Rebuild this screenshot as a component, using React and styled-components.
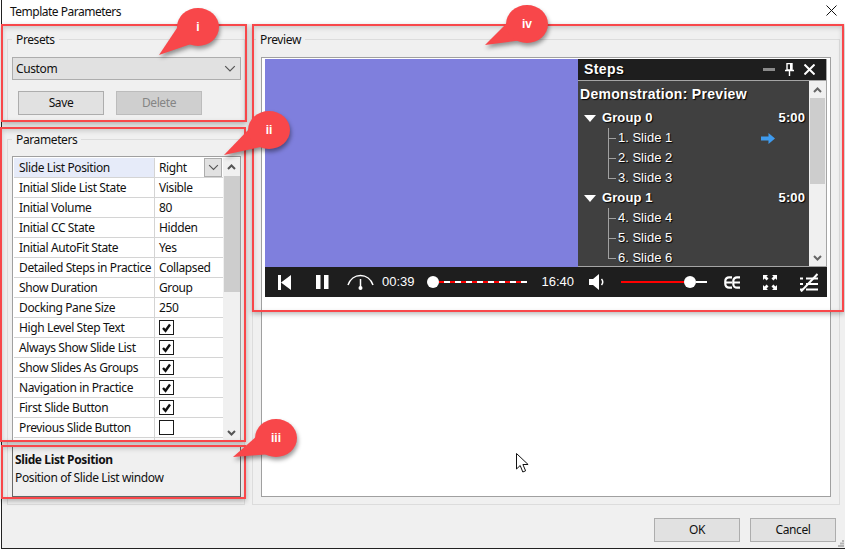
import React from 'react';
import styled, {createGlobalStyle} from 'styled-components';

const GlobalStyle = createGlobalStyle`
  html, body {
    margin: 0;
    background: #fff;
  }
  * {
    box-sizing: border-box;
  }
`

const uiFont = `"Noto Sans", "Open Sans", sans-serif`
const playerFont = `"Liberation Sans", Arial, sans-serif`

// top level
const Page = styled.div`
  position: relative;
  width: 845px;
  height: 549px;
  overflow: hidden;
  background: #fff;
  font: 12px/16px ${uiFont};
  letter-spacing: -0.38px;
  color: #111;
`

const Dialog = styled.div`
  display: flex;
  flex-direction: column;
  height: 549px;
  margin-left: 1px;
  border-left: 1px solid #222;
  border-bottom: 1px solid #222;
  background: #f0f0f0;
`

const TitleBar = styled.div`
  display: flex;
  align-items: center;
  justify-content: space-between;
  height: 24px;
  padding: 0 8px 0 8px;
  background: #fff;
  letter-spacing: -0.5px;
`

const Content = styled.div`
  display: flex;
  gap: 7px;
  padding: 7px 0 0 5px;
`

const LeftColumn = styled.div`
  display: flex;
  flex-direction: column;
  gap: 9px;
  width: 238px;
`

const GroupBox = styled.fieldset`
  display: flex;
  flex-direction: column;
  min-width: 0;
  margin: 0;
  padding: 0 3px ${p => p.$bottom || 7}px 4px;
  border: 1px solid #dcdcdc;
`

const GroupLegend = styled.legend`
  height: 16px;
  padding: 0 4px;
  margin-left: ${p => p.$offset || 0}px;
  line-height: 18px;
`

const PreviewBox = styled(GroupBox)`
  width: 588px;
  height: 474px;
  padding: 0 8px 7px 8px;
`

// presets
const Combo = styled.div`
  display: flex;
  align-items: center;
  justify-content: space-between;
  height: 23px;
  margin-top: 10px;
  padding: 0 4px 0 3px;
  border: 1px solid #adadad;
  background: #e1e1e1;
`

const PresetButtons = styled.div`
  display: flex;
  gap: 12px;
  margin: 11px 0 0 6px;
`

const Button = styled.div`
  display: flex;
  align-items: center;
  justify-content: center;
  width: 86px;
  height: 24px;
  border: 1px solid ${p => p.disabled ? '#bcbcbc' : '#adadad'};
  background: ${p => p.disabled ? '#cfcfcf' : '#e1e1e1'};
  color: ${p => p.disabled ? '#858585' : '#111'};
`

// parameter table
const ParamTable = styled.div`
  display: flex;
  height: 286px;
  margin-top: 9px;
  padding: 1px 1px 0 1px;
  border: 1px solid #a0a0a0;
  border-bottom: 0;
  background: #fff;
  overflow: hidden;
`

const ParamRows = styled.div`
  width: 209px;
  flex: none;
`

const ParamRow = styled.div`
  display: grid;
  grid-template-columns: 141px 1fr;
  height: 20px;
  border-bottom: 1px solid #d4d4d4;
`

const ParamName = styled.div`
  padding: 2px 0 0 5px;
  white-space: nowrap;
  border-right: 1px solid #d4d4d4;
  background: ${p => p.$selected ? '#e6ebf9' : '#fff'};
`

const ParamValue = styled.div`
  display: flex;
  align-items: center;
  justify-content: space-between;
  padding-left: 4px;
  padding-right: 1px;
`

const RowDrop = styled.div`
  display: flex;
  align-items: center;
  justify-content: center;
  width: 18px;
  height: 19px;
  border: 1px solid #adadad;
  background: #e1e1e1;
`

const Check = styled.div`
  display: flex;
  align-items: center;
  justify-content: center;
  width: 15px;
  height: 15px;
  border: 1px solid #1a1a1a;
  background: #fff;
`

const ScrollBar = styled.div`
  display: flex;
  flex-direction: column;
  align-items: center;
  width: ${p => p.$width}px;
  flex: none;
  height: ${p => p.$height};
  background: #f0f0f0;
`

const ScrollArrow = styled.div`
  display: flex;
  align-items: center;
  justify-content: center;
  width: 100%;
  height: ${p => p.$height}px;
  flex: none;
`

const ScrollThumb = styled.div`
  width: ${p => p.$width}px;
  height: ${p => p.$height}px;
  flex: none;
  background: #cdcdcd;
`

const ScrollSpacer = styled.div`
  flex: 1;
`

const Description = styled.div`
  height: 51px;
  margin-top: 4px;
  padding: 4px 2px;
  border: 1px solid #696969;
  line-height: 18px;
`

const DescriptionTitle = styled.div`
  font-weight: 700;
`

// preview
const PreviewFrame = styled.div`
  height: 440px;
  margin-top: 10px;
  padding: 1px 3px;
  border: 1px solid #a0a0a0;
  background: #fff;
`

const Player = styled.div`
  display: flex;
  flex-direction: column;
  height: 238px;
  font-family: ${playerFont};
  letter-spacing: 0;
`

const Stage = styled.div`
  display: flex;
  height: 208px;
`

const Slide = styled.div`
  flex: 1;
  background: #7f7fdd;
`

const StepsPanel = styled.div`
  display: flex;
  flex-direction: column;
  width: 249px;
  border-right: 1px solid #a5a5a5;
  border-bottom: 1px solid #a5a5a5;
  background: #404040;
  color: #fff;
  text-shadow: 1px 1px 1px #000;
`

const StepsHeader = styled.div`
  display: flex;
  align-items: center;
  height: 22px;
  padding: 0 11px 1px 6px;
  border-bottom: 1px solid #a5a5a5;
  background: #1e1e1e;
  font-size: 14px;
  font-weight: 700;
  letter-spacing: 0.4px;
`

const StepsTitle = styled.div`
  flex: 1;
`

const HeaderIcons = styled.div`
  display: flex;
  align-items: center;
  gap: 10px;
`

const StepsBody = styled.div`
  display: flex;
  flex: 1;
  min-height: 0;
`

const StepsList = styled.div`
  flex: 1;
  min-width: 0;
  padding: 3px 4px 0 2px;
  overflow: hidden;
`

const Demonstration = styled.div`
  height: 24px;
  font-size: 14px;
  line-height: 20px;
  font-weight: 700;
  letter-spacing: 0.3px;
`

const GroupRow = styled.div`
  display: flex;
  align-items: center;
  gap: 6px;
  height: 20px;
  padding-left: 4px;
  font-size: 13px;
  font-weight: 700;
  letter-spacing: 0.1px;
`

const GroupName = styled.div`
  flex: 1;
`

const SlideRow = styled.div`
  display: flex;
  align-items: center;
  height: 20px;
  padding-left: 28px;
  font-size: 13px;
`

const Branch = styled.div`
  width: 10px;
  height: 20px;
  flex: none;
  background:
    linear-gradient(#a0a0a0, #a0a0a0) 0 0 / 1px ${p => p.$last ? '10px' : '20px'} no-repeat,
    linear-gradient(#a0a0a0, #a0a0a0) 0 10px / 8px 1px no-repeat;
`

const SlideName = styled.div`
  width: 143px;
`

const Controls = styled.div`
  display: flex;
  align-items: center;
  height: 30px;
  background: #1e1e1e;
  color: #fff;
  font-size: 13px;
`

const Item = styled.div`
  display: flex;
  flex: none;
  margin-left: ${p => p.$left}px;
`

const TrackWrap = styled.div`
  display: flex;
  align-items: center;
  flex: none;
  width: ${p => p.$width}px;
  margin-left: ${p => p.$left}px;
`

const Knob = styled.div`
  width: 12px;
  height: 12px;
  flex: none;
  border-radius: 50%;
  background: #fff;
`

const Line = styled.div`
  height: 2px;
  flex: ${p => p.$grow ? 1 : 'none'};
  width: ${p => p.$width ? p.$width + 'px' : 'auto'};
  background: ${p => p.$dashed
    ? 'repeating-linear-gradient(90deg, #f00 0 5px, #fff 5px 11px)'
    : p.$color};
`

// footer
const Footer = styled.div`
  display: flex;
  justify-content: flex-end;
  gap: 10px;
  padding: 13px 9px 0 0;
`

// these lie over the dialog, the annotations of the screenshot
const Marker = styled.div`
  position: absolute;
  left: ${p => p.$x}px;
  top: ${p => p.$y}px;
  width: ${p => p.$w}px;
  height: ${p => p.$h}px;
  border: 2px solid #f8474a;
  box-shadow: 0 2px 5px rgba(0, 0, 0, .28), inset 0 2px 5px rgba(0, 0, 0, .16);
`

const CalloutWrap = styled.div`
  position: absolute;
  left: ${p => p.$x}px;
  top: ${p => p.$y}px;
  width: 80px;
  height: 60px;
`

const CalloutText = styled.div`
  position: absolute;
  left: ${p => p.$cx - 20}px;
  top: ${p => p.$cy - 10}px;
  width: 40px;
  height: 20px;
  font: 700 12px/20px ${playerFont};
  letter-spacing: 0;
  color: #fff;
  text-align: center;
`

const CursorWrap = styled.div`
  position: absolute;
  left: 516px;
  top: 453px;
  display: flex;
`

const GripWrap = styled.div`
  position: absolute;
  left: 838px;
  top: 540px;
  display: flex;
`

const CloseWrap = styled.div`
  display: flex;
  margin: 0 0 3px 0;
`

const Chevron = ({size = 12, color = '#555'}) => (
  <svg width={size} height={size * 0.6} viewBox="0 0 10 6">
    <path d="M1 1l4 4 4-4" fill="none" stroke={color} strokeWidth="1"/>
  </svg>
)

const ScrollChevron = ({down, color = '#555'}) => (
  <svg width="9" height="6" viewBox="0 0 9 6">
    <path d={down ? 'M1 1l3.5 3.5L8 1' : 'M1 5l3.5-3.5L8 5'} fill="none" stroke={color} strokeWidth="2"/>
  </svg>
)

const CheckMark = () => (
  <svg width="11" height="10" viewBox="0 0 11 10">
    <path d="M2 5l2.5 2.8L9 1.500" fill="none" stroke="#111" strokeWidth="2.400"/>
  </svg>
)

const Callout = ({x, y, label, blob, tail}) => {
  // blob: [cx, cy, rx, ry] and tail tip, local to the wrapper
  const [cx, cy, rx, ry] = blob
  return <CalloutWrap $x={x} $y={y}>
    <svg width="80" height="60" style={{overflow: 'visible', filter: 'drop-shadow(1px 3px 2px rgba(0,0,0,.4))'}}>
      <path d={`M${tail[0]} ${tail[1]} L${cx - rx + 2} ${cy - 2} L${cx - 4} ${cy + ry - 3} Z`} fill="#f8474a"/>
      <ellipse cx={cx} cy={cy} rx={rx} ry={ry} fill="#f8474a"/>
    </svg>
    <CalloutText $cx={cx} $cy={cy}>{label}</CalloutText>
  </CalloutWrap>
}

const params = [
  {name: 'Slide List Position', value: 'Right', selected: true},
  {name: 'Initial Slide List State', value: 'Visible'},
  {name: 'Initial Volume', value: '80'},
  {name: 'Initial CC State', value: 'Hidden'},
  {name: 'Initial AutoFit State', value: 'Yes'},
  {name: 'Detailed Steps in Practice', value: 'Collapsed'},
  {name: 'Show Duration', value: 'Group'},
  {name: 'Docking Pane Size', value: '250'},
  {name: 'High Level Step Text', checked: true},
  {name: 'Always Show Slide List', checked: true},
  {name: 'Show Slides As Groups', checked: true},
  {name: 'Navigation in Practice', checked: true},
  {name: 'First Slide Button', checked: true},
  {name: 'Previous Slide Button', checked: false},
  {name: '', value: ''},
]

const renderParam = p => (
  <ParamRow key={p.name}>
    <ParamName $selected={p.selected}>{p.name}</ParamName>
    <ParamValue>
      {p.checked === undefined
        ? p.value
        : <Check>{p.checked && <CheckMark/>}</Check>}
      {p.selected && <RowDrop><Chevron size={11}/></RowDrop>}
    </ParamValue>
  </ParamRow>
)

const groups = [
  {name: 'Group 0', slides: ['1. Slide 1', '2. Slide 2', '3. Slide 3']},
  {name: 'Group 1', slides: ['4. Slide 4', '5. Slide 5', '6. Slide 6']},
]

const StepsTree = () => groups.map(g => (
  <React.Fragment key={g.name}>
    <GroupRow>
      <svg width="12" height="7" viewBox="0 0 12 7"><path d="M0 0h12L6 7z" fill="#fff"/></svg>
      <GroupName>{g.name}</GroupName>
      <div>5:00</div>
    </GroupRow>
    {g.slides.map((s, i) => (
      <SlideRow key={s}>
        <Branch $last={i === g.slides.length - 1}/>
        <SlideName>{s}</SlideName>
        {s === '1. Slide 1' &&
          <svg width="14" height="11" viewBox="0 0 14 11">
            <path d="M0 3.500h7.500V0L14 5.500 7.500 11V7.500H0z" fill="#3f9bee"/>
          </svg>}
      </SlideRow>
    ))}
  </React.Fragment>
))

const ControlBar = () => (
  <Controls>
    <Item $left={13}>
      <svg width="13" height="15" viewBox="0 0 13 15"><path d="M0 0h3v15H0zM3 7.500L13 0v15z" fill="#fff"/></svg>
    </Item>
    <Item $left={25}>
      <svg width="13" height="14" viewBox="0 0 13 14"><path d="M0 0h4.500v14H0zM8 0h4.500v14H8z" fill="#fff"/></svg>
    </Item>
    <Item $left={18}>
      <svg width="27" height="17" viewBox="0 0 27 17">
        <path d="M1 11C3 5 8 1.500 13.500 1.500S24 5 26 11" fill="none" stroke="#fff" strokeWidth="1.500"/>
        <path d="M13.500 5v8" stroke="#fff" strokeWidth="1.500"/>
        <circle cx="13.500" cy="14" r="2" fill="#fff"/>
      </svg>
    </Item>
    <Item $left={8}>00:39</Item>
    <TrackWrap $left={12} $width={100}>
      <Knob/>
      <Line $dashed $grow/>
    </TrackWrap>
    <Item $left={15}>16:40</Item>
    <Item $left={15}>
      <svg width="18" height="16" viewBox="0 0 18 16">
        <path d="M0 5h4l6-5v16l-6-5H0z" fill="#fff"/>
        <path d="M12.500 5c1.500 1.800 1.500 4.200 0 6" fill="none" stroke="#fff" strokeWidth="1.500"/>
      </svg>
    </Item>
    <TrackWrap $left={14} $width={86}>
      <Line $width={63} $color="#f00"/>
      <Knob/>
      <Line $grow $color="#fff"/>
    </TrackWrap>
    <Item $left={17}>
      <svg width="17" height="13" viewBox="0 0 17 13">
        <path d="M8 1.300H5A3.700 3.700 0 0 0 1.300 5v3A3.700 3.700 0 0 0 5 11.700h3M1.300 6.500H8" fill="none" stroke="#fff" strokeWidth="2.200"/>
        <path d="M16 1.300h-3A3.700 3.700 0 0 0 9.300 5v3a3.700 3.700 0 0 0 3.700 3.700h3M9.300 6.500H16" fill="none" stroke="#fff" strokeWidth="2.200"/>
      </svg>
    </Item>
    <Item $left={22}>
      <svg width="14" height="15" viewBox="0 0 14 15">
        <path d="M0 0h5L3.500 1.600 5.500 3.600 3.600 5.500 1.600 3.500 0 5zM14 0v5l-1.600-1.500-2 2-1.900-1.900 2-2L9 0zM0 15v-5l1.600 1.500 2-2 1.900 1.900-2 2L5 15zM14 15H9l1.500-1.600-2-2 1.900-1.900 2 2L14 10z" fill="#fff"/>
      </svg>
    </Item>
    <Item $left={22}>
      <svg width="19" height="19" viewBox="0 0 19 19">
        <path d="M7 5.500h12M7 11h12M7 16.500h12" stroke="#fff" strokeWidth="2"/>
        <path d="M1 5.500h3M1 11h3M1 16.500h3" stroke="#fff" strokeWidth="2"/>
        <path d="M2 18.500L18.500 1" stroke="#fff" strokeWidth="2"/>
      </svg>
    </Item>
  </Controls>
)

export default function App() {
  return <Page>
    <GlobalStyle/>
    <Dialog>
      <TitleBar>
        Template Parameters
        <CloseWrap>
          <svg width="11" height="11" viewBox="0 0 11 11">
            <path d="M.5.500l10 10M10.500.500l-10 10" stroke="#111" strokeWidth="1"/>
          </svg>
        </CloseWrap>
      </TitleBar>
      <Content>
        <LeftColumn>
          <GroupBox $bottom={6}>
            <GroupLegend>Presets</GroupLegend>
            <Combo>Custom<Chevron/></Combo>
            <PresetButtons>
              <Button>Save</Button>
              <Button disabled>Delete</Button>
            </PresetButtons>
          </GroupBox>
          <GroupBox>
            <GroupLegend>Parameters</GroupLegend>
            <ParamTable>
              <ParamRows>{params.map(renderParam)}</ParamRows>
              <ScrollBar $width={17} $height="284px">
                <ScrollArrow $height={18}><ScrollChevron/></ScrollArrow>
                <ScrollThumb $width={16} $height={116}/>
                <ScrollSpacer/>
                <ScrollArrow $height={18}><ScrollChevron down/></ScrollArrow>
              </ScrollBar>
            </ParamTable>
            <Description>
              <DescriptionTitle>Slide List Position</DescriptionTitle>
              Position of Slide List window
            </Description>
          </GroupBox>
        </LeftColumn>
        <PreviewBox>
          <GroupLegend $offset={-5}>Preview</GroupLegend>
          <PreviewFrame>
            <Player>
              <Stage>
                <Slide/>
                <StepsPanel>
                  <StepsHeader>
                    <StepsTitle>Steps</StepsTitle>
                    <HeaderIcons>
                      <svg width="12" height="3" viewBox="0 0 12 3"><path d="M0 0h12v3H0z" fill="#8a8a8a"/></svg>
                      <svg width="9" height="13" viewBox="0 0 9 13">
                        <path d="M2 .500h5v6.500H2zM0 7.500h9M4.500 8v5" fill="none" stroke="#fff" strokeWidth="1.400"/>
                        <path d="M5 1h2v6H5z" fill="#fff"/>
                      </svg>
                      <svg width="11" height="11" viewBox="0 0 11 11">
                        <path d="M.5.500l10 10M10.500.500l-10 10" stroke="#fff" strokeWidth="2"/>
                      </svg>
                    </HeaderIcons>
                  </StepsHeader>
                  <StepsBody>
                    <StepsList>
                      <Demonstration>Demonstration: Preview</Demonstration>
                      <StepsTree/>
                    </StepsList>
                    <ScrollBar $width={17} $height="100%">
                      <ScrollArrow $height={17}><ScrollChevron color="#666"/></ScrollArrow>
                      <ScrollThumb $width={15} $height={86}/>
                      <ScrollSpacer/>
                      <ScrollArrow $height={17}><ScrollChevron down color="#666"/></ScrollArrow>
                    </ScrollBar>
                  </StepsBody>
                </StepsPanel>
              </Stage>
              <ControlBar/>
            </Player>
          </PreviewFrame>
        </PreviewBox>
      </Content>
      <Footer>
        <Button>OK</Button>
        <Button>Cancel</Button>
      </Footer>
    </Dialog>

    <Marker $x={1} $y={24} $w={246} $h={98}/>
    <Marker $x={0} $y={127} $w={246} $h={315}/>
    <Marker $x={1} $y={445} $w={245} $h={54}/>
    <Marker $x={252} $y={24} $w={592} $h={288}/>
    <Callout x={150} y={0} label="i" blob={[48, 27, 21, 19]} tail={[9, 55]}/>
    <Callout x={220} y={100} label="ii" blob={[49, 30, 21, 19]} tail={[4, 55]}/>
    <Callout x={225} y={410} label="iii" blob={[51, 28, 21, 19]} tail={[8, 47]}/>
    <Callout x={480} y={0} label="iv" blob={[47, 24, 21, 19]} tail={[5, 45]}/>

    <CursorWrap>
      <svg width="13" height="20" viewBox="0 0 13 20">
        <path d="M.5.500v15.500l3.700-3.500 2.600 6.500 2.800-1.200-2.700-6.300h5.200z" fill="#fff" stroke="#111" strokeWidth="1"/>
      </svg>
    </CursorWrap>
    <GripWrap>
      <svg width="7" height="7" viewBox="0 0 7 7">
        <path d="M4 0h2v2H4zM2 2.500h2v2H2zM4 2.500h2v2H4zM0 5h2v2H0zM2 5h2v2H2zM4 5h2v2H4z" fill="#b5b5b5"/>
      </svg>
    </GripWrap>
  </Page>
}
